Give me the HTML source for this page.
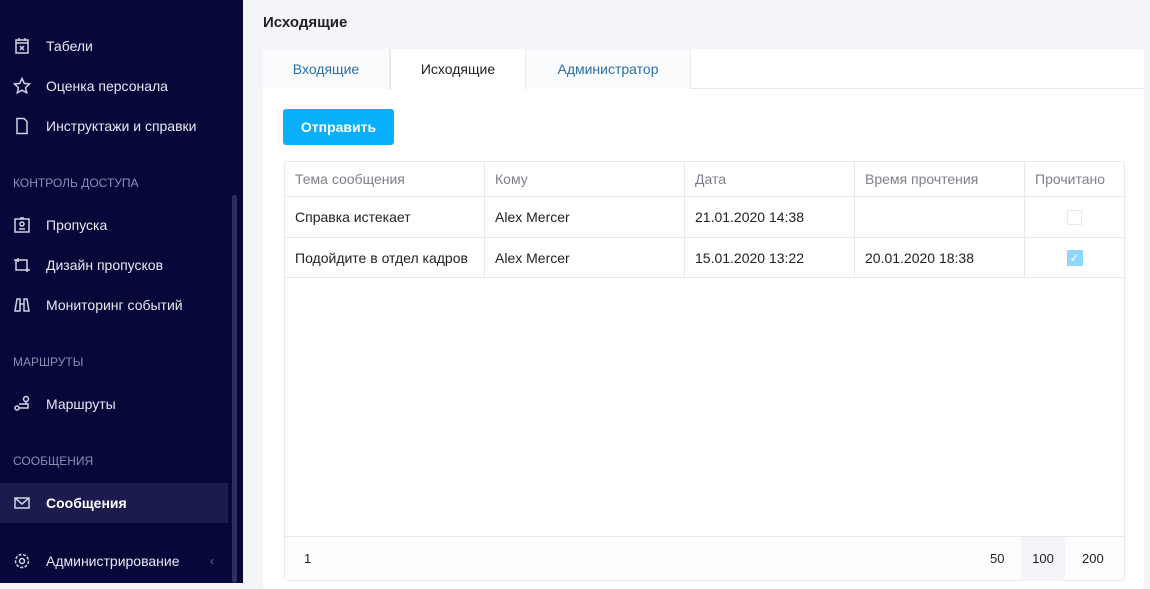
<!DOCTYPE html><html><head><meta charset="utf-8"><style>
*{box-sizing:border-box;margin:0;padding:0}
body{width:1150px;height:583px;overflow:hidden;background:#f4f5f9;font-family:"Liberation Sans",sans-serif;position:relative}
.sb{position:absolute;left:0;top:0;width:243px;height:583px;background:#07073a}
.sb .it{position:absolute;left:0;width:228px;height:40px;display:flex;align-items:center;color:#e6e8f2;font-size:14px}
.sb .it svg{position:absolute;left:13px;width:18px;height:18px;fill:none;stroke:#d0d3e6;stroke-width:1.5}
.sb .it span{position:absolute;left:46px}
.sb .lab{position:absolute;left:13px;font-size:12px;color:#8b8fb0}
.scroll{position:absolute;left:232px;top:195px;width:5px;height:388px;background:#2d2f60;border-radius:3px}
.h{position:absolute;left:263px;top:14px;font-size:15px;color:#222;font-weight:bold}
.card{position:absolute;left:263px;top:49px;width:881px;height:540px;background:#fff;border-radius:3px}
.tabs{height:40px;border-bottom:1px solid #e8e9ef;position:relative}
.tab{position:absolute;top:0;height:40px;line-height:40px;text-align:center;font-size:14px;color:#2a6fa8;background:#fff;border-right:1px solid #e8e9ef}
.btn{position:absolute;left:20px;top:60px;width:111px;height:36px;background:#0ab0fb;border-radius:3px;color:#fff;font-size:14px;font-weight:bold;text-align:center;line-height:36px}
.tbl{position:absolute;left:21px;top:112px;width:841px;height:420px;border:1px solid #e8e9ef;border-radius:3px;font-size:14px;color:#222}
.row{position:absolute;left:0;width:839px;border-bottom:1px solid #e8e9ef}
.c{position:absolute;top:0;height:100%;padding-left:10px;display:flex;align-items:center;border-right:1px solid #e8e9ef}
.hd .c{color:#7d8088}
.ft{position:absolute;left:0;top:374px;width:839px;height:44px;border-top:1px solid #e8e9ef;background:#fdfdfe;font-size:13px}
</style></head><body>
<div class="sb">
<div class="it" style="top:26px"><svg viewBox="0 0 18 18"><rect x="3" y="3" width="12" height="13"/><path d="M3 6h12M6 1v3M12 1v3M7 9l4 4M11 9l-4 4"/></svg><span>Табели</span></div>
<div class="it" style="top:66px"><svg viewBox="0 0 18 18"><path d="M9 1.5l2.3 4.9 5.2.6-3.9 3.6 1.1 5.2L9 13.2l-4.7 2.6 1.1-5.2-3.9-3.6 5.2-.6z"/></svg><span>Оценка персонала</span></div>
<div class="it" style="top:106px"><svg viewBox="0 0 18 18"><path d="M4 1.5h7l3 3v12H4z"/></svg><span>Инструктажи и справки</span></div>
<div class="lab" style="top:176px">КОНТРОЛЬ ДОСТУПА</div>
<div class="it" style="top:205px"><svg viewBox="0 0 18 18"><rect x="2" y="3" width="14" height="13"/><circle cx="9" cy="8" r="2"/><path d="M6 13h6M7 2h4"/></svg><span>Пропуска</span></div>
<div class="it" style="top:245px"><svg viewBox="0 0 18 18"><rect x="3" y="4" width="11" height="10"/><path d="M1 4h4M13 14h4M5 2v4M14 12v4"/></svg><span>Дизайн пропусков</span></div>
<div class="it" style="top:285px"><svg viewBox="0 0 18 18"><path d="M2 15l2-12h3v12zM16 15l-2-12h-3v12zM7 8h4"/></svg><span>Мониторинг событий</span></div>
<div class="lab" style="top:355px">МАРШРУТЫ</div>
<div class="it" style="top:384px"><svg viewBox="0 0 18 18"><circle cx="4" cy="13" r="2"/><circle cx="13" cy="4" r="2.5"/><path d="M6 13h9v-4H6M13 7v2"/></svg><span>Маршруты</span></div>
<div class="lab" style="top:454px">СООБЩЕНИЯ</div>
<div class="it" style="top:483px;background:#1b1b4d;color:#fff"><svg viewBox="0 0 18 18"><rect x="2" y="4" width="14" height="10"/><path d="M2 4l7 6 7-6"/></svg><span style="font-weight:bold">Сообщения</span></div>
<div class="it" style="top:541px"><svg viewBox="0 0 18 18"><circle cx="9" cy="9" r="2.5"/><circle cx="9" cy="9" r="6.5" stroke-dasharray="3 1.5"/></svg><span>Администрирование</span><span style="left:210px;color:#777;font-size:12px">‹</span></div>
<div class="scroll"></div>
</div>
<div class="h">Исходящие</div>
<div class="card">
<div class="tabs">
<div class="tab" style="left:0;width:127px;background:#fafbfd">Входящие</div>
<div class="tab" style="left:127px;width:136px;color:#222;height:41px;border-left:1px solid #e8e9ef">Исходящие</div>
<div class="tab" style="left:263px;width:165px;background:#fafbfd">Администратор</div>
</div>
<div class="btn">Отправить</div>
<div class="tbl">
<div class="row hd" style="top:0;height:35px"><div class="c" style="left:0;width:200px">Тема сообщения</div><div class="c" style="left:200px;width:200px">Кому</div><div class="c" style="left:400px;width:170px">Дата</div><div class="c" style="left:570px;width:170px">Время прочтения</div><div class="c" style="left:740px;width:99px;border:0">Прочитано</div></div>
<div class="row" style="top:35px;height:41px"><div class="c" style="left:0;width:200px">Справка истекает</div><div class="c" style="left:200px;width:200px">Alex Mercer</div><div class="c" style="left:400px;width:170px">21.01.2020 14:38</div><div class="c" style="left:570px;width:170px"></div><div class="c" style="left:740px;width:99px;border:0;justify-content:center;padding:0"><div style="width:15px;height:15px;border:1px solid #e8e9ef"></div></div></div>
<div class="row" style="top:76px;height:40px"><div class="c" style="left:0;width:200px">Подойдите в отдел кадров</div><div class="c" style="left:200px;width:200px">Alex Mercer</div><div class="c" style="left:400px;width:170px">15.01.2020 13:22</div><div class="c" style="left:570px;width:170px">20.01.2020 18:38</div><div class="c" style="left:740px;width:99px;border:0;justify-content:center;padding:0"><div style="width:16px;height:16px;background:#8fd6fb;color:#fff;font-size:12px;text-align:center;line-height:16px">✓</div></div></div>
<div class="ft"><span style="position:absolute;left:19px;top:14px">1</span><span style="position:absolute;left:705px;top:14px">50</span><span style="position:absolute;left:736px;top:0;width:44px;height:44px;background:#f4f5f9;text-align:center;line-height:44px">100</span><span style="position:absolute;left:797px;top:14px">200</span></div>
</div>
</div>
</body></html>
